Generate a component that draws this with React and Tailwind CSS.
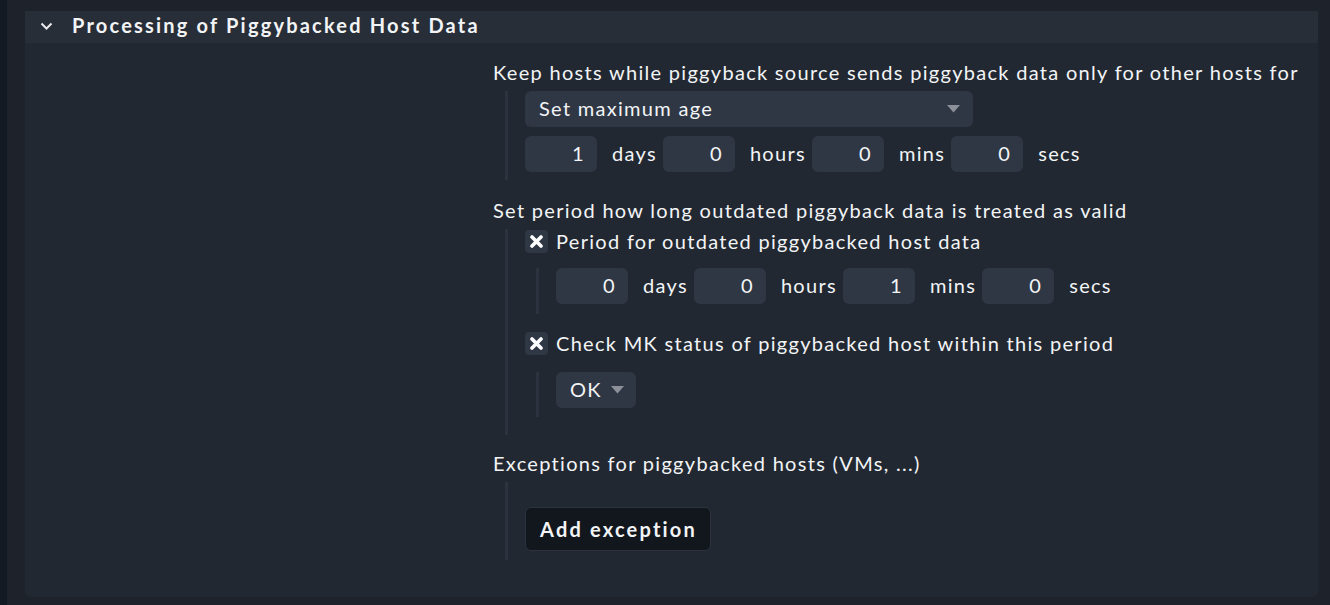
import React from 'react';

const Caret = () => (
    <svg width="13" height="8" viewBox="0 0 13 8" className="shrink-0 mt-[3px]">
        <polygon points="0,0 13,0 6.5,7.5" fill="#8c9199" />
    </svg>
);

const Check = () => (
    <div className="w-[23px] h-[23px] rounded-[4px] bg-[#2f3744] flex items-center justify-center shrink-0">
        <svg width="13" height="13" viewBox="0 0 13 13">
            <path d="M2 2 L11 11 M11 2 L2 11" stroke="#ffffff" strokeWidth="3.6" strokeLinecap="round" />
        </svg>
    </div>
);

function NumInput({ value }) {
    return (
        <div className="w-[72px] h-[36px] rounded-[6px] bg-[#2f3744] flex items-center justify-end pr-[12px] pb-[3px]">
            {value}
        </div>
    );
}

function AgeRow({ values }) {
    const units = ['days', 'hours', 'mins', 'secs'];
    return (
        <div className="flex items-center">
            {values.map((v, i) => (
                <React.Fragment key={units[i]}>
                    <NumInput value={v} />
                    <span className={`ml-[15px] pb-[3px] ${i < 3 ? 'mr-[6px]' : ''}`}>{units[i]}</span>
                </React.Fragment>
            ))}
        </div>
    );
}

export default function App() {
    return (
        <div
            className="w-[1330px] h-[605px] bg-[#1e222a] flex text-[#f2f4f6] text-[20px] leading-[24px] tracking-[1.3px]"
            style={{ fontFamily: 'Lato, "Noto Sans", sans-serif' }}
        >
            <div className="w-[7px] bg-[#121922] shrink-0" />
            <div className="flex-1 pl-[18px] pr-[12px] pt-[11px] pb-[8px]">
                <div className="h-full bg-[#222831] rounded-b-[5px] flex flex-col">
                    <header className="h-[32px] bg-[#282e38] flex items-center pl-[15px] pb-[5px]">
                        <svg width="13" height="8" viewBox="0 0 13 8" className="mr-[19px] mt-[2px]">
                            <polyline points="1.5,1.5 6.5,6.5 11.5,1.5" fill="none" stroke="#e8eaed" strokeWidth="2" />
                        </svg>
                        <h2 className="font-bold text-[20px] tracking-[2.2px]">Processing of Piggybacked Host Data</h2>
                    </header>

                    <div className="flex">
                        <div className="w-[468px] shrink-0" />
                        <div className="flex-1 pt-[17px] pb-[37px]">
                            <div>Keep hosts while piggyback source sends piggyback data only for other hosts for</div>
                            <div className="mt-[7px] ml-[12px] border-l-[3px] border-[#2c333e] pl-[17px] pb-[8px]">
                                <div className="w-[448px] h-[36px] rounded-[6px] bg-[#2f3744] flex items-center justify-between pl-[14px] pr-[13px] pb-[3px]">
                                    <span>Set maximum age</span>
                                    <Caret />
                                </div>
                                <div className="mt-[9px]">
                                    <AgeRow values={['1', '0', '0', '0']} />
                                </div>
                            </div>

                            <div className="mt-[18px]">Set period how long outdated piggyback data is treated as valid</div>
                            <div className="mt-[7px] ml-[12px] border-l-[3px] border-[#2c333e] pl-[17px] pb-[18px]">
                                <div className="flex items-center gap-[8px]">
                                    <Check />
                                    <span>Period for outdated piggybacked host data</span>
                                </div>
                                <div className="mt-[15px] ml-[11px] border-l-[3px] border-[#2c333e] pl-[17px] pb-[10px]">
                                    <AgeRow values={['0', '0', '1', '0']} />
                                </div>
                                <div className="mt-[17px] flex items-center gap-[8px]">
                                    <Check />
                                    <span>Check MK status of piggybacked host within this period</span>
                                </div>
                                <div className="mt-[17px] ml-[11px] border-l-[3px] border-[#2c333e] pl-[17px] pb-[9px]">
                                    <div className="w-[80px] h-[36px] rounded-[6px] bg-[#2f3744] flex items-center pl-[14px] gap-[9px] pb-[3px]">
                                        <span>OK</span>
                                        <Caret />
                                    </div>
                                </div>
                            </div>

                            <div className="mt-[16px]">Exceptions for piggybacked hosts (VMs, ...)</div>
                            <div className="mt-[7px] ml-[12px] border-l-[3px] border-[#2c333e] pl-[17px] pt-[25px] pb-[9px]">
                                <button className="h-[44px] pl-[14px] pr-[13px] rounded-[6px] bg-[#12171e] border border-[#2c333e] font-bold tracking-[2.2px] text-[20px]">
                                    Add exception
                                </button>
                            </div>
                        </div>
                    </div>
                </div>
            </div>
        </div>
    );
}
